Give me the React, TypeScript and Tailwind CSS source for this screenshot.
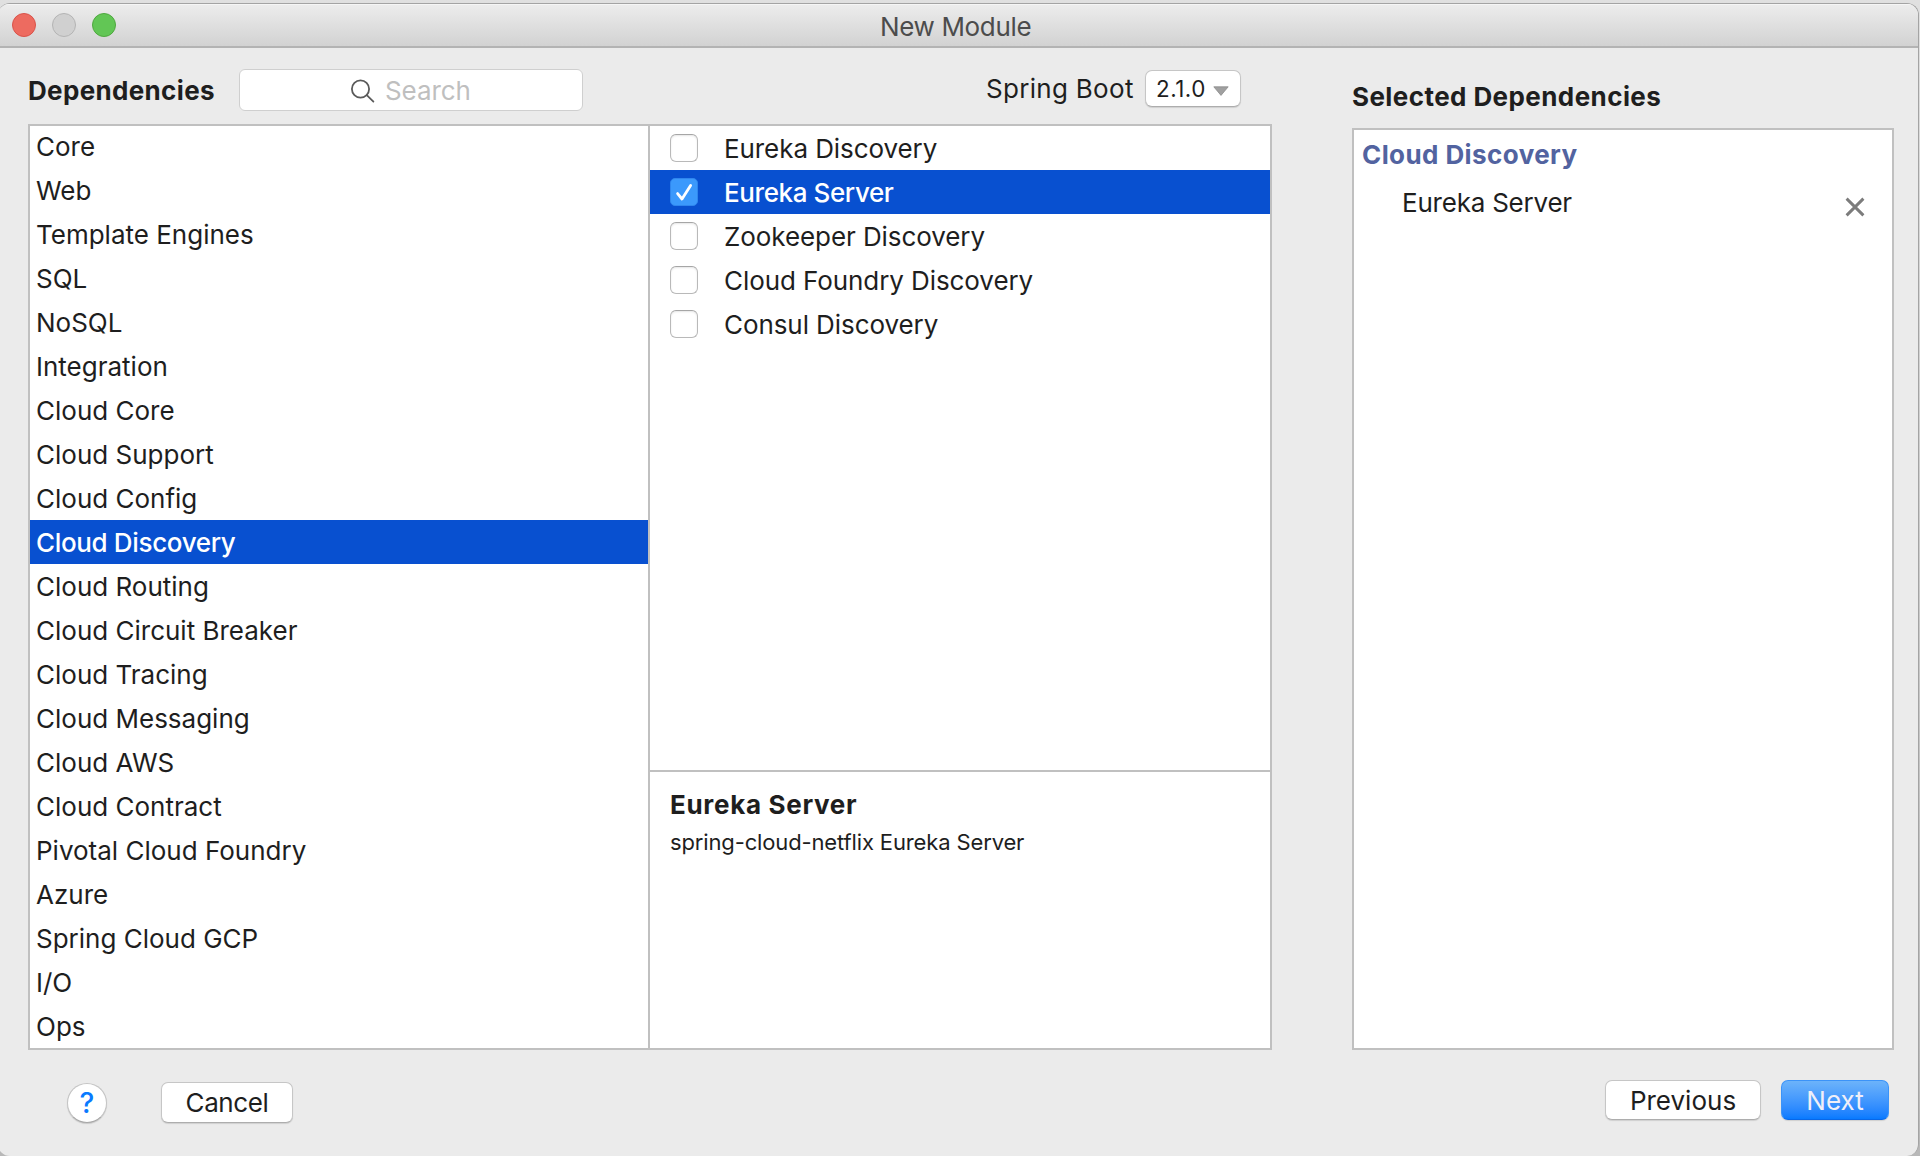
import React from "react";

const categories = [
  "Core",
  "Web",
  "Template Engines",
  "SQL",
  "NoSQL",
  "Integration",
  "Cloud Core",
  "Cloud Support",
  "Cloud Config",
  "Cloud Discovery",
  "Cloud Routing",
  "Cloud Circuit Breaker",
  "Cloud Tracing",
  "Cloud Messaging",
  "Cloud AWS",
  "Cloud Contract",
  "Pivotal Cloud Foundry",
  "Azure",
  "Spring Cloud GCP",
  "I/O",
  "Ops",
];

const dependencies = [
  { name: "Eureka Discovery", checked: false },
  { name: "Eureka Server", checked: true },
  { name: "Zookeeper Discovery", checked: false },
  { name: "Cloud Foundry Discovery", checked: false },
  { name: "Consul Discovery", checked: false },
];

function TitleBar() {
  return (
    <div className="flex h-[44px] items-center border-b-2 border-[#b3b3b3] bg-linear-to-b from-[#ededed] to-[#d2d2d2] pl-[14px] shadow-[inset_0_1px_0_#f6f6f6]">
      <div className="flex gap-4">
        <span className="size-6 rounded-full border border-[#d9534a] bg-[#ed6b60]" />
        <span className="size-6 rounded-full border border-[#b4b4b4] bg-[#d0d0d0]" />
        <span className="size-6 rounded-full border border-[#4fa83f] bg-[#62c655]" />
      </div>
      <h1 className="ml-[764px] pt-[3px] tracking-[-0.35px] text-[#4c4c4c]">New Module</h1>
    </div>
  );
}

function SearchField() {
  return (
    <div className="flex h-[42px] w-[344px] items-center rounded-[6px] border border-[#cfcfcf] bg-white pl-[110px]">
      <svg className="size-[26px]" viewBox="0 0 26 26" fill="none" stroke="#5a5a5a" strokeWidth="1.8" strokeLinecap="round">
        <circle cx="10.5" cy="12" r="8.6" />
        <path d="M16.8 18.2 L23.4 24.6" />
      </svg>
      <span className="ml-[9px] pt-[2px] tracking-[-0.1px] text-[#bfbfbf]">Search</span>
    </div>
  );
}

function VersionSelect() {
  return (
    <div className="flex h-[37px] w-[96px] items-center rounded-[7px] border border-[#c6c6c6] border-b-[#adadad] bg-white pl-[10px] shadow-[0_1px_1px_rgba(0,0,0,0.12)]">
      <span className="text-[22.4px] tracking-[0.5px]">2.1.0</span>
      <svg className="ml-[7px] mt-[4px] h-[10px] w-[16px]" viewBox="0 0 16 10">
        <path d="M0.8 0.8 H15.2 L8 9.4 Z" fill="#a0a0a0" stroke="#8c8c8c" strokeWidth="0.8" />
      </svg>
    </div>
  );
}

function Checkbox({ checked }: { checked: boolean }) {
  return checked ? (
    <span className="flex size-7 items-center justify-center rounded-[5px] border border-[#2f86ee] bg-[#3b99fc]">
      <svg className="size-[26px]" viewBox="0 0 26 26" fill="none" stroke="#fff" strokeWidth="2.8" strokeLinecap="round" strokeLinejoin="round">
        <path d="M6.6 14.6 L11 20 L19.6 6.4" />
      </svg>
    </span>
  ) : (
    <span className="size-7 rounded-[6px] border border-[#b9b9b9] border-t-[#a6a6a6] bg-white shadow-[inset_0_1px_2px_rgba(0,0,0,0.1)]" />
  );
}

function CategoryList() {
  return (
    <ul className="-mt-[2px] w-[618px]">
      {categories.map((name) => (
        <li
          key={name}
          className={
            name === "Cloud Discovery"
              ? "flex h-11 items-center bg-[#0850d0] pt-[2px] pl-[6px] font-medium tracking-[-0.35px] text-white"
              : "flex h-11 items-center pt-[2px] pl-[6px]"
          }
        >
          {name}
        </li>
      ))}
    </ul>
  );
}

function DependencyPane() {
  return (
    <div className="flex flex-1 flex-col border-l-2 border-[#c0c0c0]">
      <ul className="h-[644px]">
        {dependencies.map((d) => (
          <li
            key={d.name}
            className={
              d.checked
                ? "flex h-11 items-center gap-[26px] bg-[#0850d0] pl-5 font-medium tracking-[-0.4px] text-white"
                : "flex h-11 items-center gap-[26px] pl-5 tracking-[-0.08px]"
            }
          >
            <Checkbox checked={d.checked} />
            <span className="pt-[2px]">{d.name}</span>
          </li>
        ))}
      </ul>
      <div className="flex-1 border-t-2 border-[#c0c0c0] pl-[20px] pt-[17px]">
        <h2 className="font-bold leading-[32px] tracking-[0.68px]">Eureka Server</h2>
        <p className="mt-[7px] text-[22px] leading-[28px] tracking-[-0.14px]">spring-cloud-netflix Eureka Server</p>
      </div>
    </div>
  );
}

export default function App() {
  return (
    <div className="h-[1156px] w-[1920px] overflow-hidden bg-linear-to-b from-[#e0e0e0] to-[#b8b8b8] pt-[3px] font-[Inter,sans-serif] text-[26px] leading-[32px] whitespace-nowrap text-[#1e1e1e]">
      <div className="-ml-[2px] flex h-[1153px] w-[1921px] flex-col overflow-hidden rounded-[12px] border-t border-r border-[#a4a4a4] bg-[#ebebeb]">
        <TitleBar />
        <div className="flex h-[1002px] pl-[30px]">
          <section className="flex w-[1244px] flex-col">
            <header className="flex h-[76px] items-start">
              <h2 className="mt-[27px] w-[211px] font-bold tracking-[0.34px]">Dependencies</h2>
              <div className="mt-[21px]">
                <SearchField />
              </div>
              <span className="mt-[25px] ml-[403px] w-[159px] tracking-[0.3px]">Spring Boot</span>
              <div className="mt-[22px]">
                <VersionSelect />
              </div>
            </header>
            <div className="flex h-[926px] border-2 border-[#c0c0c0] bg-white">
              <CategoryList />
              <DependencyPane />
            </div>
          </section>
          <section className="ml-[80px] flex w-[542px] flex-col">
            <h2 className="h-[80px] pt-[33px] font-bold tracking-[0.42px]">Selected Dependencies</h2>
            <div className="h-[922px] border-2 border-[#c0c0c0] bg-white">
              <h3 className="mt-[9px] pl-[8px] font-bold tracking-[0.41px] text-[#5263a0]">Cloud Discovery</h3>
              <div className="mt-[16px] flex items-start pr-[26px] pl-[48px]">
                <span className="flex-1 tracking-[-0.22px]">Eureka Server</span>
                <svg className="mt-[9px] size-[22px]" viewBox="0 0 22 22" fill="none" stroke="#7c7c7c" strokeWidth="2.9">
                  <path d="M2.6 2.6 L19.4 19.4 M19.4 2.6 L2.6 19.4" />
                </svg>
              </div>
            </div>
          </section>
        </div>
        <footer className="flex items-start pt-[30px] pl-[69px]">
          <button className="mt-[3px] flex size-10 items-center justify-center rounded-full border border-[#c4c4c4] border-b-[#a8a8a8] bg-white text-[28px] font-medium text-[#0a7aff] shadow-[0_1px_1px_rgba(0,0,0,0.15)]">
            ?
          </button>
          <button className="mt-[2px] ml-[54px] h-[41px] w-[132px] rounded-[7px] border border-[#c6c6c6] border-b-[#adadad] bg-white tracking-[-0.4px] shadow-[0_1px_1px_rgba(0,0,0,0.12)]">
            Cancel
          </button>
          <button className="ml-[1312px] h-[40px] w-[156px] rounded-[7px] border border-[#c6c6c6] border-b-[#adadad] bg-white pt-[2px] shadow-[0_1px_1px_rgba(0,0,0,0.12)]">
            Previous
          </button>
          <button className="ml-[20px] h-[40px] w-[108px] rounded-[7px] border border-[#3b93f8] border-b-[#0867e8] bg-linear-to-b from-[#6cb3fa] to-[#067aff] pt-[2px] text-[#f0eff8] shadow-[0_1px_1px_rgba(0,0,0,0.12)]">
            Next
          </button>
        </footer>
      </div>
    </div>
  );
}
